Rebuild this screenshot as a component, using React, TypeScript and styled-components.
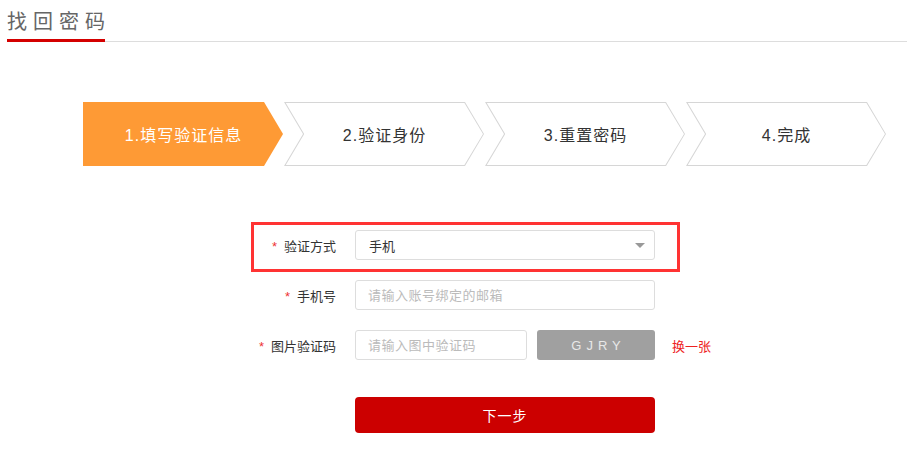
import React from "react";
import styled, { createGlobalStyle, css } from "styled-components";

const GlobalStyle = createGlobalStyle`
  html, body { margin: 0; padding: 0; background: #fff; }
  body {
    font-family: "Liberation Sans", "Noto Sans CJK SC", sans-serif;
    color: #333;
  }
`;

const Page = styled.div`
  width: 907px;
  height: 450px;
  overflow: hidden;
  background: #fff;
`;

const Header = styled.div`
  margin-left: 7px;
  padding-top: 8px;
  border-bottom: 1px solid #ddd;
  display: flex;
`;

const Title = styled.h1`
  margin: 0 0 -1px;
  width: 98px;
  padding-bottom: 3px;
  border-bottom: 3px solid #d40000;
  font-size: 20px;
  font-weight: normal;
  line-height: 28px;
  letter-spacing: 6px;
  color: #666;
  white-space: nowrap;
`;

const Steps = styled.ol`
  list-style: none;
  margin: 60px 0 0 83px;
  padding: 0;
  display: flex;
  gap: 1px;
`;

const outerShape = (first: boolean) =>
  first
    ? "polygon(0 0, calc(100% - 19px) 0, 100% 50%, calc(100% - 19px) 100%, 0 100%)"
    : "polygon(0 0, calc(100% - 19px) 0, 100% 50%, calc(100% - 19px) 100%, 0 100%, 19px 50%)";

const innerShape = (first: boolean) =>
  first
    ? "polygon(0 0, calc(100% - 18.6px) 0, 100% 50%, calc(100% - 18.6px) 100%, 0 100%)"
    : "polygon(0.8px 0, calc(100% - 18.6px) 0, 100% 50%, calc(100% - 18.6px) 100%, 0.8px 100%, 19.2px 50%)";

const Step = styled.li<{ $active: boolean; $first: boolean }>`
  width: 200px;
  height: 64px;
  padding: 1px;
  box-sizing: border-box;
  display: flex;
  background: ${(p) => (p.$active ? "#fe9a35" : "#d6d6d6")};
  clip-path: ${(p) => outerShape(p.$first)};
`;

const StepFace = styled.div<{ $active: boolean; $first: boolean }>`
  flex: 1;
  display: flex;
  align-items: center;
  justify-content: center;
  padding-left: 1px;
  background: ${(p) => (p.$active ? "#fe9a35" : "#fff")};
  clip-path: ${(p) => innerShape(p.$first)};
  font-size: 16px;
  letter-spacing: 1px;
  color: ${(p) => (p.$active ? "#fff" : "#333")};
`;

const Form = styled.form`
  margin: 64px 0 0 240px;
  width: 440px;
  display: flex;
  flex-direction: column;
  gap: 20px;
`;

const Row = styled.div<{ $highlight?: boolean }>`
  position: relative;
  display: flex;
  align-items: center;
  height: 30px;
  white-space: nowrap;
  & > * {
    flex: none;
  }
  ${(p) =>
    p.$highlight &&
    css`
      &::after {
        content: "";
        position: absolute;
        left: 11px;
        right: 0;
        top: -8px;
        bottom: -12px;
        border: 3px solid #f33;
        pointer-events: none;
      }
    `}
`;

const Label = styled.label`
  width: 96px;
  margin-right: 19px;
  text-align: right;
  font-size: 13px;
  color: #333;
`;

const Required = styled.span`
  color: #e33;
  margin-right: 7px;
`;

const Select = styled.div`
  width: 300px;
  height: 30px;
  box-sizing: border-box;
  border: 1px solid #ddd;
  border-radius: 3px;
  display: flex;
  align-items: center;
  justify-content: space-between;
  padding: 0 9px 0 13px;
  font-size: 13px;
  color: #333;
`;

const Caret = styled.span`
  width: 0;
  height: 0;
  border-left: 5px solid transparent;
  border-right: 5px solid transparent;
  border-top: 5px solid #999;
`;

const Input = styled.input<{ $width: number }>`
  width: ${(p) => p.$width}px;
  height: 30px;
  box-sizing: border-box;
  border: 1px solid #ddd;
  border-radius: 3px;
  padding: 0 12px;
  margin: 0;
  outline: none;
  font-family: inherit;
  font-size: 13px;
  letter-spacing: 0.5px;
  color: #333;
  &::placeholder {
    color: #bbb;
  }
`;

const Captcha = styled.div`
  width: 118px;
  height: 30px;
  margin-left: 10px;
  box-sizing: border-box;
  padding-left: 5px;
  border-radius: 3px;
  background: #a0a0a0;
  display: flex;
  align-items: center;
  justify-content: center;
  font-size: 13px;
  letter-spacing: 5px;
  color: #e8e8e8;
`;

const Refresh = styled.a`
  margin-left: 17px;
  font-size: 13px;
  color: #e22;
  text-decoration: none;
  cursor: pointer;
`;

const ButtonRow = styled.div`
  margin-top: 17px;
  padding-left: 115px;
`;

const SubmitButton = styled.button`
  width: 300px;
  height: 36px;
  border: none;
  border-radius: 4px;
  background: #cc0000;
  color: #fff;
  font-family: inherit;
  font-size: 14px;
  letter-spacing: 1px;
  cursor: pointer;
`;

const steps = ["1.填写验证信息", "2.验证身份", "3.重置密码", "4.完成"];

export default function App() {
  return (
    <Page>
      <GlobalStyle />
      <Header>
        <Title>找回密码</Title>
      </Header>
      <Steps>
        {steps.map((s, i) => (
          <Step key={s} $active={i === 0} $first={i === 0}>
            <StepFace $active={i === 0} $first={i === 0}>
              {s}
            </StepFace>
          </Step>
        ))}
      </Steps>
      <Form onSubmit={(e) => e.preventDefault()}>
        <Row $highlight>
          <Label>
            <Required>*</Required>验证方式
          </Label>
          <Select>
            <span>手机</span>
            <Caret />
          </Select>
        </Row>
        <Row>
          <Label>
            <Required>*</Required>手机号
          </Label>
          <Input $width={300} placeholder="请输入账号绑定的邮箱" />
        </Row>
        <Row>
          <Label>
            <Required>*</Required>图片验证码
          </Label>
          <Input $width={172} placeholder="请输入图中验证码" />
          <Captcha>GJRY</Captcha>
          <Refresh>换一张</Refresh>
        </Row>
        <ButtonRow>
          <SubmitButton type="submit">下一步</SubmitButton>
        </ButtonRow>
      </Form>
    </Page>
  );
}
